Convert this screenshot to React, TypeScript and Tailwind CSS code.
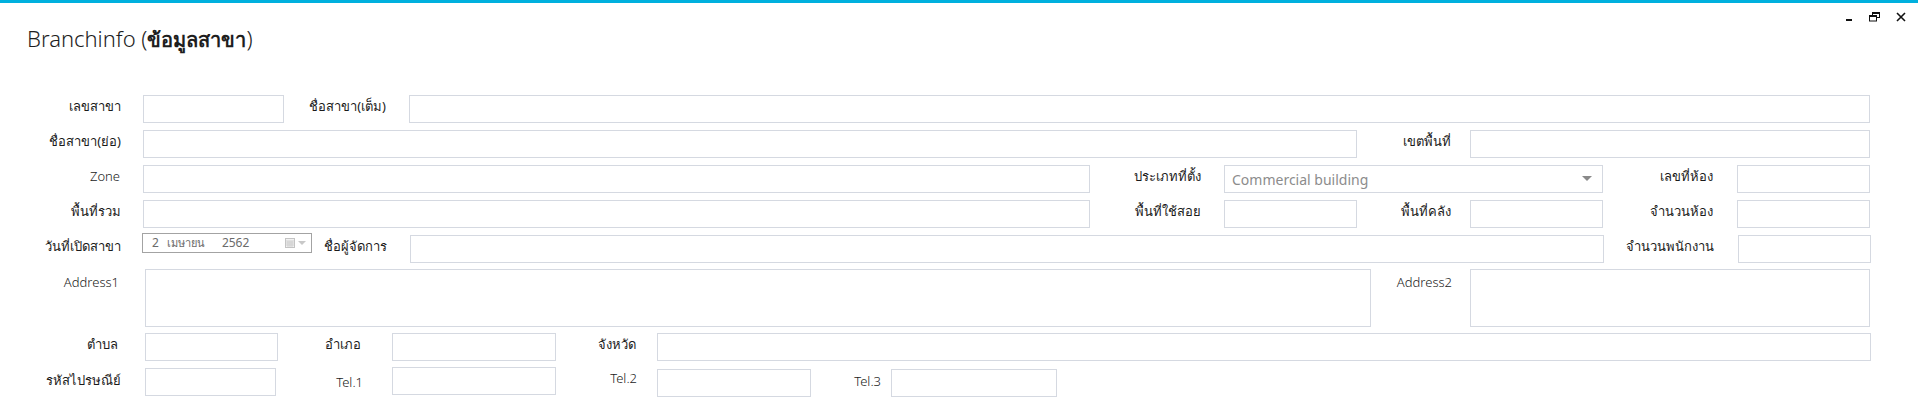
import React from "react";

const box = "shrink-0 h-[28px] border border-[#d5d9e1] bg-white";
const lbl = "shrink-0 text-right text-[13px] leading-[18px] pt-[2px] text-[#1b1b1b] whitespace-nowrap";
const en = " font-light text-[#000]";

function WindowControls() {
  return (
    <div className="flex items-start gap-[16px] pr-[12px] pt-[9px]">
      <svg width="8" height="10" viewBox="0 0 8 10">
        <rect x="1" y="7" width="6" height="2" fill="#111" />
      </svg>
      <svg width="11" height="10" viewBox="0 0 11 10">
        <rect x="3.5" y="0.5" width="7" height="5" fill="none" stroke="#111" strokeWidth="1" />
        <rect x="3.5" y="0.5" width="7" height="1.5" fill="#111" />
        <rect x="0.5" y="3.5" width="7" height="5.5" fill="#fff" stroke="#111" strokeWidth="1" />
        <rect x="0.5" y="3.5" width="7" height="1.5" fill="#111" />
      </svg>
      <svg width="10" height="10" viewBox="0 0 10 10">
        <path d="M1 1 L9 9 M9 1 L1 9" stroke="#111" strokeWidth="1.6" />
      </svg>
    </div>
  );
}

function DateBox() {
  return (
    <div className="shrink-0 w-[170px] h-[20px] border border-[#a3a3a3] bg-white flex items-center text-[12px] text-[#6b6b6b] pl-[9px]">
      <span>2</span>
      <span className="ml-[8px] text-[11px]">เมษายน</span>
      <span className="ml-[17px]">2562</span>
      <svg width="10" height="10" viewBox="0 0 10 10" className="ml-[36px]">
        <rect x="0.5" y="0.5" width="9" height="9" fill="#f2f2f2" stroke="#c4c4c4" />
        <path d="M0.5 3 H9.5 M0.5 5 H9.5 M0.5 7 H9.5 M3 3 V9.5 M5 3 V9.5 M7 3 V9.5" stroke="#c4c4c4" strokeWidth="0.7" />
      </svg>
      <svg width="8" height="5" viewBox="0 0 8 5" className="ml-[3px]">
        <path d="M0 0 H8 L4 4 Z" fill="#c8c8c8" />
      </svg>
    </div>
  );
}

export default function App() {
  return (
    <div
      className="w-[1918px] h-[418px] bg-white overflow-hidden"
      style={{ fontFamily: '"Noto Sans", "Open Sans", sans-serif' }}
    >
      <div className="h-[3px] bg-[#00b0de]" />
      <div className="flex justify-between">
        <h1 className="pl-[27px] pt-[19px] text-[22px] leading-[32px] text-[#1e1e1e] font-light">
          Branchinfo (<span className="text-[20px] font-bold">ข้อมูลสาขา</span>)
        </h1>
        <WindowControls />
      </div>

      <div className="flex flex-col mt-[39px]">
        {/* row 1 */}
        <div className="flex">
          <div className={lbl + " w-[143px] pr-[22px]"}>เลขสาขา</div>
          <div className={box + " w-[141px]"} />
          <div className={lbl + " w-[125px] pr-[23px]"}>ชื่อสาขา(เต็ม)</div>
          <div className={box + " w-[1461px]"} />
        </div>

        {/* row 2 */}
        <div className="flex mt-[7px]">
          <div className={lbl + " w-[143px] pr-[22px]"}>ชื่อสาขา(ย่อ)</div>
          <div className={box + " w-[1214px]"} />
          <div className={lbl + " w-[113px] pr-[19px]"}>เขตพื้นที่</div>
          <div className={box + " w-[400px]"} />
        </div>

        {/* row 3 */}
        <div className="flex mt-[7px]">
          <div className={lbl + " w-[143px] pr-[23px]" + en}>Zone</div>
          <div className={box + " w-[947px]"} />
          <div className={lbl + " w-[134px] pr-[23px]"}>ประเภทที่ตั้ง</div>
          <div className={box + " w-[379px] flex items-center justify-between pl-[7px] pr-[10px]"}>
            <span className="text-[14px] text-[#8c8c8c]">Commercial building</span>
            <svg width="10" height="6" viewBox="0 0 10 6">
              <path d="M0 0 H10 L5 5 Z" fill="#8a8a8a" />
            </svg>
          </div>
          <div className={lbl + " w-[134px] pr-[24px]"}>เลขที่ห้อง</div>
          <div className={box + " w-[133px]"} />
        </div>

        {/* row 4 */}
        <div className="flex mt-[7px]">
          <div className={lbl + " w-[143px] pr-[22px]"}>พื้นที่รวม</div>
          <div className={box + " w-[947px]"} />
          <div className={lbl + " w-[134px] pr-[23px]"}>พื้นที่ใช้สอย</div>
          <div className={box + " w-[133px]"} />
          <div className={lbl + " w-[113px] pr-[19px]"}>พื้นที่คลัง</div>
          <div className={box + " w-[133px]"} />
          <div className={lbl + " w-[134px] pr-[24px]"}>จำนวนห้อง</div>
          <div className={box + " w-[133px]"} />
        </div>

        {/* row 5 */}
        <div className="flex mt-[5px]">
          <div className={lbl + " w-[142px] pr-[21px] pt-[4px]"}>วันที่เปิดสาขา</div>
          <DateBox />
          <div className={lbl + " w-[98px] pr-[23px] pt-[4px]"}>ชื่อผู้จัดการ</div>
          <div className={box + " w-[1194px] mt-[2px]"} />
          <div className={lbl + " w-[134px] pr-[24px] pt-[4px]"}>จำนวนพนักงาน</div>
          <div className={box + " w-[133px] mt-[2px]"} />
        </div>

        {/* row 6 */}
        <div className="flex mt-[6px]">
          <div className={lbl + " w-[145px] pr-[26px] pt-[4px]" + en}>Address1</div>
          <div className="shrink-0 w-[1226px] h-[58px] border border-[#d5d9e1]" />
          <div className={lbl + " w-[99px] pr-[18px] pt-[4px]" + en}>Address2</div>
          <div className="shrink-0 w-[400px] h-[58px] border border-[#d5d9e1]" />
        </div>

        {/* row 7 */}
        <div className="flex mt-[6px]">
          <div className={lbl + " w-[145px] pr-[27px]"}>ตำบล</div>
          <div className={box + " w-[133px]"} />
          <div className={lbl + " w-[114px] pr-[31px]"}>อำเภอ</div>
          <div className={box + " w-[164px]"} />
          <div className={lbl + " w-[101px] pr-[21px]"}>จังหวัด</div>
          <div className={box + " w-[1214px]"} />
        </div>

        {/* row 8 */}
        <div className="flex mt-[6px] items-start">
          <div className={lbl + " w-[145px] pr-[24px] pt-[4px]"}>รหัสไปรษณีย์</div>
          <div className={box + " w-[131px] mt-[1px]"} />
          <div className={lbl + " w-[116px] pr-[29px] pt-[6px]" + en}>Tel.1</div>
          <div className={box + " w-[164px]"} />
          <div className={lbl + " w-[101px] pr-[20px] pt-[2px]" + en}>Tel.2</div>
          <div className={box + " w-[154px] mt-[2px]"} />
          <div className={lbl + " w-[80px] pr-[10px] pt-[5px]" + en}>Tel.3</div>
          <div className={box + " w-[166px] mt-[2px]"} />
        </div>
      </div>
    </div>
  );
}
